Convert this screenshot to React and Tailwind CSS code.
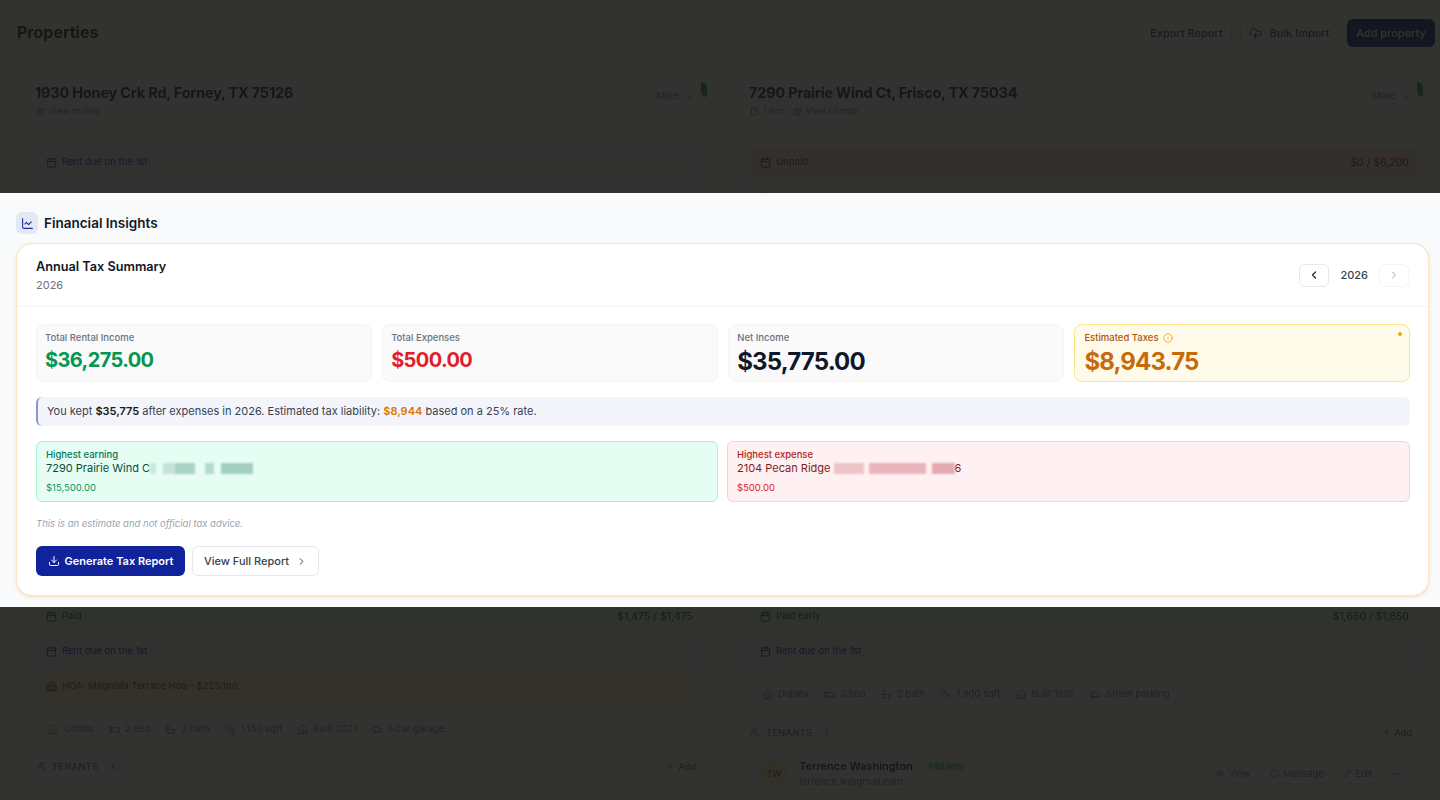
import {
  Calendar,
  ChartLine,
  ChevronDown,
  ChevronLeft,
  ChevronRight,
  CloudUpload,
  Download,
  Ellipsis,
  Eye,
  File,
  Home,
  Info,
  Bed,
  Bath,
  Map,
  MessageCircle,
  Pencil,
  Plus,
  Ruler,
  Car,
  Users,
  Building2,
} from "lucide-react";

function StatusRow({ tone, label, amount, Icon = Calendar }) {
  const tones = {
    blue: "bg-[#f1f4ff] border-[#e8edff] text-[#0a2ad0]",
    green: "bg-[#e8faee] border-[#e8faee] text-[#0f4a26]",
    red: "bg-[#fbe6e6] border-[#fbe6e6] text-[#a01212]",
    amber: "bg-[#fdf3d6] border-[#fbe6a8] text-[#8a3206]",
  };
  return (
    <div className={`h-[29px] shrink-0 pl-[9px] pr-[8px] flex items-center justify-between border rounded-md text-[9.5px] ${tones[tone]}`}>
      <span className="flex items-center gap-[5px]">
        <Icon size={11} />
        {label}
      </span>
      {amount && <span className="text-[10.5px]">{amount}</span>}
    </div>
  );
}

function Facts({ items }) {
  return (
    <div className="flex items-center gap-[15px] px-3 text-[9.5px] text-[#6b7280]">
      {items.map(([Icon, text]) => (
        <span key={text} className="flex items-center gap-[5px]">
          <Icon size={11} />
          {text}
        </span>
      ))}
    </div>
  );
}

function TenantsHead() {
  return (
    <div className="pr-[6px] flex items-center justify-between text-[9px] font-semibold tracking-wider text-[#6b7280]">
      <span className="flex items-center gap-[6px]">
        <Users size={10} />
        TENANTS
        <span className="w-4 h-4 rounded-full bg-[#f3f4f6] flex items-center justify-center text-[8px]">1</span>
      </span>
      <span className="flex items-center gap-1 font-medium tracking-normal text-[#c2410c]">
        <Plus size={9} />
        Add
      </span>
    </div>
  );
}

function PropertyTop({ title, docs, children }) {
  return (
    <>
      <div className="flex justify-between items-start">
        <div className="pt-[2px]">
          <h3 className="-ml-[1px] text-[14.5px] leading-[20px] font-bold tracking-[-0.2px] text-[#111827]">{title}</h3>
          <div className="mt-[3px] flex items-center gap-[9px] text-[8.5px] leading-[11px] text-[#6b7280]">
            {docs && (
              <span className="flex items-center gap-1">
                <File size={9} />
                1 doc
              </span>
            )}
            <span className="flex items-center gap-1">
              <Map size={9} />
              View on map
            </span>
          </div>
        </div>
        <button className="relative mt-[4px] h-[23px] w-[53px] flex items-center justify-center gap-[5px] rounded-md border border-[#fbd5a0] bg-white text-[9.5px] text-[#6b7280]">
          More
          <ChevronDown size={10} />
          <span className="absolute -right-[6px] -top-[4px] w-[6px] h-[15px] rounded-tr-full rounded-bl-full bg-[#16a34a]" />
        </button>
      </div>
      <div className="mt-[31px] flex flex-col gap-[6px]">{children}</div>
    </>
  );
}

function Background() {
  return (
    <div className="h-[800px] overflow-hidden bg-[#fbfaf6] blur-[0.5px]">
      <header className="h-[68px] pl-[17px] pr-[5px] pt-[19px] flex items-start justify-between">
        <h1 className="text-[16px] leading-[26px] font-bold text-[#111827]">Properties</h1>
        <div className="flex gap-2 text-[11px] font-medium">
          <button className="h-[28px] w-[91px] rounded-md border border-[#dfe2e6] bg-white text-[#374151]">Export Report</button>
          <button className="h-[28px] w-[99px] rounded-md border border-[#dfe2e6] bg-white text-[#374151] flex items-center justify-center gap-[7px]">
            <CloudUpload size={13} />
            Bulk Import
          </button>
          <button className="h-[28px] w-[88px] rounded-md bg-[#0a1a80] text-white">Add property</button>
        </div>
      </header>

      <div className="pl-[18px] grid grid-cols-[702px_692px] gap-x-[13px]">
        <div className="flex flex-col gap-[12px]">
          <section className="h-[125px] overflow-hidden rounded-t-xl border border-[#fde4c4] bg-white px-[17px] pt-[12px]">
            <PropertyTop title="1930 Honey Crk Rd, Forney, TX 75126">
              <StatusRow tone="blue" label="Rent due on the 1st" />
            </PropertyTop>
          </section>
          <section className="rounded-t-xl border border-[#fde4c4] bg-white px-[17px] pt-[396px] flex flex-col gap-[6px]">
            <StatusRow tone="green" label="Paid" amount="$1,475 / $1,475" />
            <StatusRow tone="blue" label="Rent due on the 1st" />
            <StatusRow tone="amber" label="HOA: Magnolia Terrace Hoa - $225/mo" Icon={Building2} />
            <div className="mt-[15px]">
              <Facts
                items={[
                  [Home, "Condo"],
                  [Bed, "2 bed"],
                  [Bath, "2 bath"],
                  [Ruler, "1,150 sqft"],
                  [Home, "Built 2021"],
                  [Car, "1-car garage"],
                ]}
              />
            </div>
            <div className="mt-[16px]">
              <TenantsHead />
            </div>
            <div className="mt-[20px] pl-[16px] flex items-start">
              <span className="w-[28px] h-[28px] rounded-full bg-[#fef3c7]" />
              <span className="ml-[104px] w-[28px] h-[12px] rounded bg-[#dcfce7]" />
            </div>
          </section>
        </div>

        <div className="flex flex-col gap-[12px]">
          <section className="h-[240px] overflow-hidden rounded-t-xl border border-[#fde4c4] bg-white pl-[16px] pr-[6px] pt-[12px]">
            <PropertyTop title="7290 Prairie Wind Ct, Frisco, TX 75034" docs>
              <StatusRow tone="red" label="Unpaid" amount="$0 / $6,200" />
              <StatusRow tone="blue" label="Rent due on the 1st" />
            </PropertyTop>
          </section>
          <section className="rounded-t-xl border border-[#fde4c4] bg-white pl-[16px] pr-[6px] pt-[281px] flex flex-col gap-[6px]">
            <StatusRow tone="green" label="Paid early" amount="$1,650 / $1,650" />
            <StatusRow tone="blue" label="Rent due on the 1st" />
            <div className="mt-[15px]">
              <Facts
                items={[
                  [Home, "Duplex"],
                  [Bed, "3 bed"],
                  [Bath, "2 bath"],
                  [Ruler, "1,800 sqft"],
                  [Home, "Built 1995"],
                  [Car, "Street parking"],
                ]}
              />
            </div>
            <div className="mt-[17px]">
              <TenantsHead />
            </div>
            <div className="mt-[12px] pl-[10px] pr-[11px] flex items-center justify-between">
              <div className="flex items-center gap-[11px]">
                <span className="w-[28px] h-[28px] rounded-full bg-[#fef3c7] text-[#b45309] text-[9px] font-semibold flex items-center justify-center">TW</span>
                <div>
                  <div className="flex items-center gap-3">
                    <span className="text-[11px] font-semibold text-[#111827]">Terrence Washington</span>
                    <span className="px-1 rounded bg-[#dcfce7] text-[7.5px] text-[#15803d]">Paid early</span>
                  </div>
                  <div className="text-[9.5px] text-[#6b7280]">terrence.w@gmail.com</div>
                </div>
              </div>
              <div className="flex gap-[7px] text-[9.5px] text-[#6b7280]">
                <span className="h-[21px] w-[48px] flex items-center justify-center gap-1 border border-[#e9ebee] rounded-md"><Eye size={9} />View</span>
                <span className="h-[21px] w-[66px] flex items-center justify-center gap-1 border border-[#e9ebee] rounded-md"><MessageCircle size={9} />Message</span>
                <span className="h-[21px] w-[41px] flex items-center justify-center gap-1 border border-[#e9ebee] rounded-md"><Pencil size={9} />Edit</span>
                <span className="h-[21px] w-[22px] flex items-center justify-center border border-[#e9ebee] rounded-md"><Ellipsis size={10} /></span>
              </div>
            </div>
          </section>
        </div>
      </div>
    </div>
  );
}

function Stat({ label, value, valueClass }) {
  return (
    <div className="h-[58px] px-[8px] pt-[6px] rounded-lg border border-[#f3f4f6] bg-[#fafafa]">
      <div className="text-[9.5px] leading-[13px] font-medium text-[#6b7280]">{label}</div>
      <div className={`mt-[3px] font-bold ${valueClass}`}>{value}</div>
    </div>
  );
}

function Redacted({ blocks }) {
  return (
    <span className="flex items-center blur-[1px]">
      {blocks.map(([w, color], i) => (
        <span key={i} className={`block h-[11px] ${color}`} style={{ width: w }} />
      ))}
    </span>
  );
}

function Highlight({ box, labelColor, nameColor, amountColor, label, name, tail, blocks, amount }) {
  return (
    <div className={`h-[61px] px-[9px] pt-[6px] rounded-md border ${box}`}>
      <div className={`text-[9.5px] leading-[13px] font-medium ${labelColor}`}>{label}</div>
      <div className={`flex items-center text-[11px] leading-[15px] ${nameColor}`}>
        <span className="whitespace-pre">{name}</span>
        <Redacted blocks={blocks} />
        {tail && <span>{tail}</span>}
      </div>
      <div className={`mt-[5px] text-[9.5px] leading-[14px] ${amountColor}`}>{amount}</div>
    </div>
  );
}

function InsightsPanel() {
  return (
    <div className="absolute left-0 right-0 top-[193px] h-[414px] bg-[#f8fafc] pl-[16px] pr-[11px] flex flex-col">
      <div className="h-[50px] pt-[10px] flex items-center gap-[6px]">
        <span className="w-[22px] h-[22px] rounded-md bg-[#e4e8f4] text-[#1e2f8f] flex items-center justify-center">
          <ChartLine size={13} />
        </span>
        <h2 className="text-[13.5px] font-semibold text-[#111827]">Financial Insights</h2>
      </div>

      <div className="h-[353px] rounded-2xl border border-[#fde4c4] bg-white shadow-[0_1px_3px_rgba(251,191,116,0.5)] flex flex-col">
        <div className="h-[63px] shrink-0 border-b border-[#f3f4f6] pl-[19px] pr-[19px] flex items-center justify-between">
          <div>
            <h3 className="text-[12.7px] leading-[18px] font-semibold text-[#111827]">Annual Tax Summary</h3>
            <div className="mt-[1px] text-[11px] leading-[16px] text-[#6b7280]">2026</div>
          </div>
          <div className="flex items-center gap-[11px]">
            <button className="w-[30px] h-[23px] rounded-md border border-[#e5e7eb] text-[#1f2937] flex items-center justify-center">
              <ChevronLeft size={12} strokeWidth={2.5} />
            </button>
            <span className="text-[11px] font-medium text-[#374151]">2026</span>
            <button className="w-[30px] h-[23px] rounded-md border border-[#f3f4f6] text-[#9ca3af] flex items-center justify-center">
              <ChevronRight size={12} />
            </button>
          </div>
        </div>

        <div className="pl-[19px] pr-[18px] pt-[17px] flex flex-col">
          <div className="grid grid-cols-4 gap-[10.5px]">
            <Stat label="Total Rental Income" value="$36,275.00" valueClass="text-[20px] leading-[26px] tracking-[-0.6px] text-[#059650]" />
            <Stat label="Total Expenses" value="$500.00" valueClass="text-[20px] leading-[26px] tracking-[-0.6px] text-[#e11d2e]" />
            <Stat label="Net Income" value="$35,775.00" valueClass="text-[24px] leading-[30px] tracking-[-0.85px] text-[#0f172a]" />
            <div className="relative h-[58px] px-[9px] pt-[6px] rounded-lg border border-[#fde68a] bg-[#fffbeb]">
              <div className="flex items-center gap-[4px] text-[9.5px] leading-[13px] font-medium text-[#b45309]">
                Estimated Taxes
                <Info size={10} className="text-[#f59e0b]" />
              </div>
              <div className="mt-[3px] text-[24px] leading-[30px] tracking-[-0.85px] font-bold text-[#c96a08]">$8,943.75</div>
              <span className="absolute right-[7px] top-[7px] w-[4px] h-[4px] rounded-full bg-[#f59e0b]" />
            </div>
          </div>

          <div className="mt-[15px] h-[29px] pl-[9px] flex items-center rounded-md border-l-2 border-[#8b95c9] bg-[#f4f5fa] text-[11px] text-[#374151]">
            <span>
              You kept <b className="font-semibold text-[#111827]">$35,775</b> after expenses in 2026. Estimated tax liability:{" "}
              <b className="font-semibold text-[#d97706]">$8,944</b> based on a 25% rate.
            </span>
          </div>

          <div className="mt-[15px] grid grid-cols-[682px_1fr] gap-[9px]">
            <Highlight
              box="border-[#a7f3d0] bg-[#e6fdf3]"
              labelColor="text-[#047857]"
              nameColor="text-[#064e3b]"
              amountColor="text-[#059669]"
              label="Highest earning"
              name="7290 Prairie Wind C"
              amount="$15,500.00"
              blocks={[
                [6, "bg-[#c9e8dc]"],
                [7, "bg-[#e6fdf3]"],
                [12, "bg-[#c4e3d7]"],
                [20, "bg-[#a9d3c4]"],
                [10, "bg-[#e6fdf3]"],
                [9, "bg-[#b5dacc]"],
                [7, "bg-[#e6fdf3]"],
                [32, "bg-[#a3cfbf]"],
              ]}
            />
            <Highlight
              box="border-[#fecdd3] bg-[#fff0f1]"
              labelColor="text-[#b91c1c]"
              nameColor="text-[#7f1d1d]"
              amountColor="text-[#dc2626]"
              label="Highest expense"
              name="2104 Pecan Ridge "
              tail="6"
              amount="$500.00"
              blocks={[
                [30, "bg-[#edc3c8]"],
                [5, "bg-[#fff0f1]"],
                [57, "bg-[#e9b4bb]"],
                [6, "bg-[#fff0f1]"],
                [23, "bg-[#e4a9b1]"],
              ]}
            />
          </div>

          <p className="mt-[15px] text-[9.5px] leading-[14px] italic text-[#9ca3af]">This is an estimate and not official tax advice.</p>

          <div className="mt-[15px] flex gap-[7px]">
            <button className="h-[30px] w-[149px] rounded-md bg-[#10239a] text-white text-[11px] font-semibold flex items-center justify-center gap-[5px]">
              <Download size={12} />
              Generate Tax Report
            </button>
            <button className="h-[30px] w-[127px] rounded-md border border-[#e5e7eb] bg-white text-[#374151] text-[11px] font-medium flex items-center justify-center gap-[7px]">
              View Full Report
              <ChevronRight size={11} />
            </button>
          </div>
        </div>
      </div>
    </div>
  );
}

export default function App() {
  return (
    <div className="relative h-[800px] overflow-hidden font-['Inter',sans-serif]">
      <Background />
      {/* dim layer over the page */}
      <div className="absolute inset-0 bg-[#161613]/[0.88]" />
      <InsightsPanel />
    </div>
  );
}
